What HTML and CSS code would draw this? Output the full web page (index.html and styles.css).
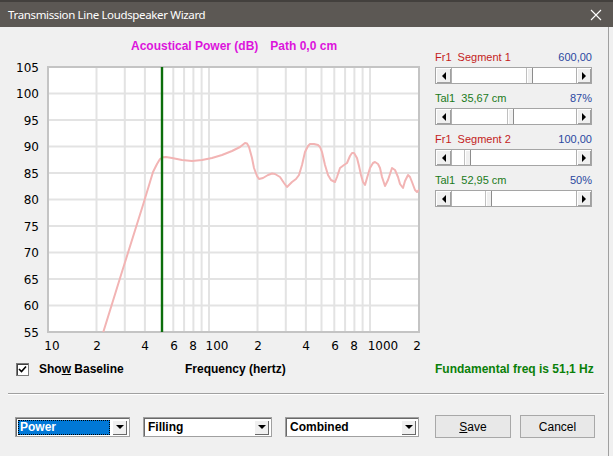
FILE: index.html
```html
<!DOCTYPE html>
<html>
<head>
<meta charset="utf-8">
<link rel="stylesheet" href="styles.css">
</head>
<body>
<div class="titlebar">
  <span class="title">Transmission Line Loudspeaker Wizard</span>
  <svg class="close" width="12" height="12" viewBox="0 0 12 12"><path d="M1 1 L11 11 M11 1 L1 11" stroke="#fff" stroke-width="1.1" fill="none"/></svg>
</div>
<div class="content">
  <div class="upper">
    <div class="chart-col">
      <div class="chart-title"><span>Acoustical Power (dB)</span><span>Path 0,0 cm</span></div>
      <svg class="chart" width="430" height="295" viewBox="0 58 430 295">
        <defs><clipPath id="plot"><rect x="48" y="67" width="371" height="265"/></clipPath></defs>
        <rect x="48" y="67" width="371" height="265" fill="#fff"/>
        <g stroke="#e3e3e3" stroke-width="2">
          <line x1="48" x2="419" y1="93.5" y2="93.5"/>
          <line x1="48" x2="419" y1="120" y2="120"/>
          <line x1="48" x2="419" y1="146.5" y2="146.5"/>
          <line x1="48" x2="419" y1="173" y2="173"/>
          <line x1="48" x2="419" y1="199.5" y2="199.5"/>
          <line x1="48" x2="419" y1="226" y2="226"/>
          <line x1="48" x2="419" y1="252.5" y2="252.5"/>
          <line x1="48" x2="419" y1="279" y2="279"/>
          <line x1="48" x2="419" y1="305.5" y2="305.5"/>
          <line y1="67" y2="332" x1="96.5" x2="96.5"/>
          <line y1="67" y2="332" x1="124.8" x2="124.8"/>
          <line y1="67" y2="332" x1="144.9" x2="144.9"/>
          <line y1="67" y2="332" x1="173.3" x2="173.3"/>
          <line y1="67" y2="332" x1="184.1" x2="184.1"/>
          <line y1="67" y2="332" x1="193.4" x2="193.4"/>
          <line y1="67" y2="332" x1="201.6" x2="201.6"/>
          <line y1="67" y2="332" x1="209" x2="209"/>
          <line y1="67" y2="332" x1="257.5" x2="257.5"/>
          <line y1="67" y2="332" x1="285.8" x2="285.8"/>
          <line y1="67" y2="332" x1="305.9" x2="305.9"/>
          <line y1="67" y2="332" x1="321.5" x2="321.5"/>
          <line y1="67" y2="332" x1="334.3" x2="334.3"/>
          <line y1="67" y2="332" x1="345.1" x2="345.1"/>
          <line y1="67" y2="332" x1="354.4" x2="354.4"/>
          <line y1="67" y2="332" x1="362.6" x2="362.6"/>
          <line y1="67" y2="332" x1="370" x2="370"/>
        </g>
        <rect x="48" y="67" width="371" height="265" fill="none" stroke="#c4c4c4" stroke-width="2"/>
        <polyline clip-path="url(#plot)" fill="none" stroke="#f2b4b4" stroke-width="2" stroke-linejoin="round" stroke-linecap="round"
          points="103,333 121,275 143,205 150,182 153,172 157,164 160,159 163,157.3 166,157 172,158 182,160 192,161 202,160 212,158 222,155 232,151 240,147 245,143 247,143.5 249,147 252,158 254,168 257,176 259,179 263,178 268,175 272,173.5 275,174 280,177 284,183 287,187 290,184 292,182 296,179 299,175 302,165 305,152 308,146 310,144 314,144 318,145 320,147 322,152 325,165 328,175 331,180 335,182 337,177 340,168 344,165 347,163 350,156 352,153 354,153 357,158 359,166 361,175 363,182 365,185 367,178 370,168 373,163 375,162 378,164 380,168 382,177 385,186 388,180 392,168 395,170 398,177 400,184 403,188 405,181 408,175 410,177 412,182 415,190 417,192 420,189"/>
        <line x1="162" x2="162" y1="67" y2="332" stroke="#0b6e0b" stroke-width="2.4"/>
        <g class="ylab" text-anchor="end">
          <text x="39" y="71.5">105</text>
          <text x="39" y="98">100</text>
          <text x="39" y="124.5">95</text>
          <text x="39" y="151">90</text>
          <text x="39" y="177.5">85</text>
          <text x="39" y="204">80</text>
          <text x="39" y="230.5">75</text>
          <text x="39" y="257">70</text>
          <text x="39" y="283.5">65</text>
          <text x="39" y="310">60</text>
          <text x="39" y="336.5">55</text>
        </g>
        <g class="xlab" text-anchor="middle">
          <text x="52" y="349.5">10</text>
          <text x="97" y="349.5">2</text>
          <text x="145" y="349.5">4</text>
          <text x="174" y="349.5">6</text>
          <text x="193" y="349.5">8</text>
          <text x="217" y="349.5">100</text>
          <text x="258" y="349.5">2</text>
          <text x="306" y="349.5">4</text>
          <text x="335" y="349.5">6</text>
          <text x="354" y="349.5">8</text>
          <text x="383" y="349.5">1000</text>
          <text x="417" y="349.5">2</text>
        </g>
      </svg>
    </div>
    <div class="panel">
      <div class="param">
        <div class="plabel"><span class="red">Fr1  Segment 1</span><span class="blue">600,00</span></div>
        <div class="sbar"><span class="sbtn lbtn"><i class="arr-l"></i></span><span class="track"><span class="thumb" style="left:74px"></span></span><span class="sbtn rbtn"><i class="arr-r"></i></span></div>
      </div>
      <div class="param">
        <div class="plabel"><span class="green">Tal1  35,67 cm</span><span class="blue">87%</span></div>
        <div class="sbar"><span class="sbtn lbtn"><i class="arr-l"></i></span><span class="track"><span class="thumb" style="left:55px"></span></span><span class="sbtn rbtn"><i class="arr-r"></i></span></div>
      </div>
      <div class="param">
        <div class="plabel"><span class="red">Fr1  Segment 2</span><span class="blue">100,00</span></div>
        <div class="sbar"><span class="sbtn lbtn"><i class="arr-l"></i></span><span class="track"><span class="thumb" style="left:12px"></span></span><span class="sbtn rbtn"><i class="arr-r"></i></span></div>
      </div>
      <div class="param">
        <div class="plabel"><span class="green">Tal1  52,95 cm</span><span class="blue">50%</span></div>
        <div class="sbar"><span class="sbtn lbtn"><i class="arr-l"></i></span><span class="track"><span class="thumb" style="left:33px"></span></span><span class="sbtn rbtn"><i class="arr-r"></i></span></div>
      </div>
    </div>
  </div>
  <div class="info-row">
    <div class="cb-wrap">
      <span class="checkbox"><svg width="9" height="9" viewBox="0 0 9 9"><path d="M1 4 L3.5 6.5 L8 1.5" stroke="#000" stroke-width="1.6" fill="none"/></svg></span>
      <span>Sho<u>w</u> Baseline</span>
    </div>
    <div class="freq">Frequency (hertz)</div>
    <div class="fund">Fundamental freq is 51,1 Hz</div>
  </div>
  <div class="sep"></div>
  <div class="bottom-row">
    <div class="combo c1"><span class="ctext sel">Power</span><span class="dbtn"><i class="arr-d"></i></span></div>
    <div class="combo c2"><span class="ctext">Filling</span><span class="dbtn"><i class="arr-d"></i></span></div>
    <div class="combo c3"><span class="ctext">Combined</span><span class="dbtn"><i class="arr-d"></i></span></div>
    <button class="btn save"><u>S</u>ave</button>
    <button class="btn cancel">Cancel</button>
  </div>
</div>
</body>
</html>
```

FILE: styles.css
```css
* { box-sizing: border-box; }
html, body { margin: 0; padding: 0; }
body {
  width: 613px;
  height: 456px;
  background: #f0f0f0;
  font-family: "Liberation Sans", Arial, sans-serif;
  overflow: hidden;
}
.titlebar {
  height: 27px;
  background: #5c5854;
  border-top: 2px solid #43403d;
  display: flex;
  align-items: center;
  justify-content: space-between;
  padding: 0 11px 0 8px;
  color: #fff;
}
.title {
  font-family: "Noto Sans", "Open Sans", sans-serif;
  font-size: 11.5px;
  letter-spacing: -0.35px;
}
.close { display: block; }
.content {
  width: 609px;
  height: 429px;
  border-right: 1px solid #a0a0a0;
}
.upper { display: flex; height: 326px; }
.chart-col { width: 430px; }
.chart-title {
  height: 31px;
  padding: 10px 0 0 131px;
  line-height: 19px;
  color: #dc14dc;
  font-weight: bold;
  font-size: 12px;
  display: flex;
  gap: 12px;
}
.chart { display: block; }
.ylab, .xlab {
  font-family: "DejaVu Sans", sans-serif;
  font-size: 12px;
  fill: #000;
}
.panel { width: 157px; margin-left: 5px; padding-top: 23px; }
.param { margin-bottom: 7px; }
.plabel {
  height: 14px;
  line-height: 14px;
  display: flex;
  justify-content: space-between;
  font-size: 11px;
  margin-bottom: 3px;
  white-space: pre;
}
.red { color: #c41c1c; }
.green { color: #1a7a1a; }
.blue { color: #2a48a0; }
.sbar {
  display: flex;
  height: 17px;
  width: 157px;
  border: 1px solid #a5a5a5;
  background: #fff;
}
.sbtn {
  width: 16px;
  background: #f0f0f0;
  display: flex;
  align-items: center;
  justify-content: center;
  box-shadow: inset 1px 1px 0 #fff, inset -1px -1px 0 #a0a0a0;
}
.lbtn { border-right: 1px solid #b0b0b0; }
.rbtn { border-left: 1px solid #b0b0b0; width: 15px; }
.track { flex: 1; position: relative; }
.thumb {
  position: absolute;
  top: 0;
  bottom: 0;
  width: 7px;
  background: #f0f0f0;
  border-left: 1px solid #c0c0c0;
  border-right: 1px solid #8c8c8c;
  box-shadow: inset 1px 1px 0 #fff;
}
.arr-l, .arr-r, .arr-d { display: block; width: 0; height: 0; }
.arr-l { border-top: 4px solid transparent; border-bottom: 4px solid transparent; border-right: 4px solid #000; }
.arr-r { border-top: 4px solid transparent; border-bottom: 4px solid transparent; border-left: 4px solid #000; }
.arr-d { border-left: 4px solid transparent; border-right: 4px solid transparent; border-top: 4px solid #000; }
.info-row {
  display: flex;
  align-items: center;
  height: 18px;
  margin-top: 7px;
  font-weight: bold;
  font-size: 12px;
}
.cb-wrap {
  width: 185px;
  padding-left: 16px;
  display: flex;
  align-items: center;
  gap: 10px;
}
.checkbox {
  width: 13px;
  height: 13px;
  border: 1px solid #7a7a7a;
  box-shadow: inset 1px 1px 0 #404040;
  background: #fff;
  display: flex;
  align-items: center;
  justify-content: center;
}
.freq { width: 250px; }
.fund { color: #0a800a; }
.sep {
  margin: 15px 0 0 8px;
  width: 596px;
  height: 2px;
  border-top: 1px solid #a0a0a0;
  border-bottom: 1px solid #fff;
}
.bottom-row {
  display: flex;
  align-items: center;
  height: 23px;
  margin-top: 20px;
  padding-left: 15px;
}
.combo {
  height: 20px;
  display: flex;
  align-items: stretch;
  background: #fff;
  border: 1px solid #a0a0a0;
  box-shadow: inset 1px 1px 0 #696969;
  padding: 2px 2px 1px 2px;
  font-weight: bold;
  font-size: 12px;
}
.c1 { width: 115px; margin-right: 13px; }
.c2 { width: 129px; margin-right: 13px; }
.c3 { width: 134px; margin-right: 16px; }
.ctext { flex: 1; padding-left: 2px; line-height: 15px; margin-right: 2px; }
.ctext.sel {
  background: #0078d7;
  color: #fff;
  outline: 1px dotted #000;
  outline-offset: -1px;
}
.dbtn {
  width: 15px;
  background: #f0f0f0;
  display: flex;
  align-items: center;
  justify-content: center;
  box-shadow: inset 1px 1px 0 #fff, inset -1px -1px 0 #696969;
}
.btn {
  height: 23px;
  font-family: "Liberation Sans", Arial, sans-serif;
  font-size: 12px;
  color: #000;
  background: #e8e8e8;
  border: 1px solid #a8a8a8;
  padding: 0;
  margin: 0;
}
.save { width: 76px; margin-right: 9px; }
.cancel { width: 75px; }
```
